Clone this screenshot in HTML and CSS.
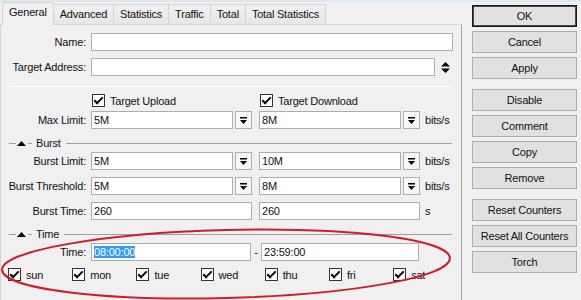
FILE: index.html
```html
<!DOCTYPE html>
<html lang="en">
<head>
  <meta charset="UTF-8">
  <title>Simple Queue</title>
  <link rel="stylesheet" href="styles.css">
</head>
<body>
  <div class="window">
    <!-- left: tabbed form -->
    <div class="main">
      <ul class="tabs">
        <li class="active">General</li>
        <li>Advanced</li>
        <li>Statistics</li>
        <li>Traffic</li>
        <li>Total</li>
        <li>Total Statistics</li>
      </ul>
      <div class="panel">
        <div class="row first">
          <label class="label">Name:</label>
          <div class="box wide"></div>
        </div>
        <div class="row">
          <label class="label">Target Address:</label>
          <div class="box addr"></div>
          <svg class="updown" width="9" height="11" viewBox="0 0 9 11"><path d="M4.5 0 L9 4.5 L0 4.5 Z M0 6.5 L9 6.5 L4.5 11 Z" fill="#000"/></svg>
        </div>
        <div class="divider"></div>

        <div class="row checks">
          <span class="label"></span>
          <div class="pair">
            <span class="check-item"><span class="check"></span>Target Upload</span>
            <span class="check-item"><span class="check"></span>Target Download</span>
          </div>
        </div>
        <div class="row close">
          <label class="label">Max Limit:</label>
          <div class="pair">
            <div class="combo"><div class="box">5M</div><span class="drop"><svg width="7" height="7" viewBox="0 0 7 7"><path d="M0 0H7V1.5H0Z M0 3H7L3.5 7Z" fill="#000"/></svg></span></div>
            <div class="combo"><div class="box">8M</div><span class="drop"><svg width="7" height="7" viewBox="0 0 7 7"><path d="M0 0H7V1.5H0Z M0 3H7L3.5 7Z" fill="#000"/></svg></span></div>
            <span class="unit">bits/s</span>
          </div>
        </div>

        <div class="group-head">
          <span class="rule short"></span>
          <svg class="caret" width="9" height="5" viewBox="0 0 9 5"><path d="M4.5 0L9 5H0Z" fill="#000"/></svg>
          <span class="rule tiny"></span>
          <span class="group-title">Burst</span>
          <span class="rule fill"></span>
        </div>
        <div class="row after-head">
          <label class="label">Burst Limit:</label>
          <div class="pair">
            <div class="combo"><div class="box">5M</div><span class="drop"><svg width="7" height="7" viewBox="0 0 7 7"><path d="M0 0H7V1.5H0Z M0 3H7L3.5 7Z" fill="#000"/></svg></span></div>
            <div class="combo"><div class="box">10M</div><span class="drop"><svg width="7" height="7" viewBox="0 0 7 7"><path d="M0 0H7V1.5H0Z M0 3H7L3.5 7Z" fill="#000"/></svg></span></div>
            <span class="unit">bits/s</span>
          </div>
        </div>
        <div class="row">
          <label class="label">Burst Threshold:</label>
          <div class="pair">
            <div class="combo"><div class="box">5M</div><span class="drop"><svg width="7" height="7" viewBox="0 0 7 7"><path d="M0 0H7V1.5H0Z M0 3H7L3.5 7Z" fill="#000"/></svg></span></div>
            <div class="combo"><div class="box">8M</div><span class="drop"><svg width="7" height="7" viewBox="0 0 7 7"><path d="M0 0H7V1.5H0Z M0 3H7L3.5 7Z" fill="#000"/></svg></span></div>
            <span class="unit">bits/s</span>
          </div>
        </div>
        <div class="row">
          <label class="label">Burst Time:</label>
          <div class="pair">
            <div class="box">260</div>
            <div class="box">260</div>
            <span class="unit">s</span>
          </div>
        </div>

        <div class="group-head">
          <span class="rule short"></span>
          <svg class="caret" width="9" height="5" viewBox="0 0 9 5"><path d="M4.5 0L9 5H0Z" fill="#000"/></svg>
          <span class="rule tiny"></span>
          <span class="group-title">Time</span>
          <span class="rule fill"></span>
        </div>
        <div class="row after-head">
          <label class="label">Time:</label>
          <div class="box time-from"><span class="sel">08:00:00</span></div>
          <span class="dash">-</span>
          <div class="box time-to">23:59:00</div>
        </div>
        <div class="days">
          <span class="check-item"><span class="check"></span>sun</span>
          <span class="check-item"><span class="check"></span>mon</span>
          <span class="check-item"><span class="check"></span>tue</span>
          <span class="check-item"><span class="check"></span>wed</span>
          <span class="check-item"><span class="check"></span>thu</span>
          <span class="check-item"><span class="check"></span>fri</span>
          <span class="check-item"><span class="check"></span>sat</span>
        </div>
      </div>
    </div>

    <!-- right: action buttons -->
    <div class="actions">
      <div class="btn-group">
        <button class="default">OK</button>
        <button>Cancel</button>
        <button>Apply</button>
      </div>
      <div class="btn-group">
        <button>Disable</button>
        <button>Comment</button>
        <button>Copy</button>
        <button>Remove</button>
      </div>
      <div class="btn-group">
        <button>Reset Counters</button>
        <button>Reset All Counters</button>
        <button>Torch</button>
      </div>
    </div>

    <!-- hand-drawn highlight -->
    <svg class="mark" width="581" height="300" viewBox="0 0 581 300">
      <ellipse cx="226" cy="264" rx="224" ry="34" transform="rotate(-1.5 226 264)" fill="none" stroke="#cc1f2b" stroke-width="2"/>
    </svg>
  </div>
</body>
</html>
```

FILE: styles.css
```css
* {
  margin: 0;
  padding: 0;
  box-sizing: border-box;
}
body {
  font-family: 'Liberation Sans', Arial, sans-serif;
  font-size: 11px;
  letter-spacing: -0.2px;
  color: #111;
  background: #f0f0f0;
  overflow: hidden;
}
.window {
  position: relative;
  display: flex;
  width: 581px;
  height: 300px;
  border-top: 2px solid #e1e8f0;
}
/* Tabs */
.main {
  width: 462px;
}
.tabs {
  display: flex;
  align-items: flex-end;
  height: 22px;
  padding-left: 2px;
  list-style: none;
}
.tabs li {
  height: 20px;
  line-height: 18px;
  padding: 0 6px;
  border: 1px solid #d4d4d4;
  border-bottom: none;
  border-left: none;
  background: linear-gradient(#f2f2f2, #e6e6e6);
  white-space: nowrap;
}
.tabs li.active {
  position: relative;
  height: 23px;
  margin-bottom: -1px;
  padding: 0 6px;
  line-height: 19px;
  border-left: 1px solid #d4d4d4;
  background: #f0f0f0;
  z-index: 1;
}
.panel {
  height: 276px;
  border: 1px solid #d4d4d4;
  border-right-color: #a9a9a9;
  border-bottom: none;
  background: #f0f0f0;
}
/* Form rows */
.row {
  display: flex;
  align-items: center;
  height: 18px;
  margin-top: 7px;
}
.row.first {
  margin-top: 8px;
}
.row.close {
  margin-top: 4px;
}
.row.after-head {
  margin-top: 2px;
}
.row.checks {
  height: 13px;
}
.label {
  flex: none;
  width: 90px;
  padding-right: 5px;
  text-align: right;
  white-space: nowrap;
}
.box {
  height: 18px;
  line-height: 16px;
  padding-left: 2px;
  background: #fff;
  border: 1px solid #abadb3;
  white-space: nowrap;
}
.box.wide {
  width: 362px;
}
.box.addr {
  width: 344px;
}
.updown {
  margin-left: 6px;
}
.divider {
  height: 1px;
  margin: 10px 9px 0 8px;
  background: #d8d8d8;
  border-bottom: 1px solid #fff;
}
.pair {
  display: grid;
  grid-template-columns: 161px 161px auto;
  column-gap: 7px;
  align-items: center;
}
.combo {
  display: flex;
  gap: 2px;
}
.combo .box {
  flex: 1;
}
.drop {
  display: flex;
  align-items: center;
  justify-content: center;
  width: 17px;
  height: 18px;
  border: 1px solid #abadb3;
  background: #f7f7f7;
}
.unit {
  margin-left: -2px;
}
/* Checkboxes */
.check-item {
  display: flex;
  align-items: center;
  gap: 5px;
  white-space: nowrap;
}
.row.checks .check-item {
  padding-left: 1px;
}
.check {
  position: relative;
  flex: none;
  width: 13px;
  height: 13px;
  background: #fff;
  border: 1px solid #333;
}
.check::after {
  content: '';
  position: absolute;
  left: 3px;
  top: 0;
  width: 3px;
  height: 7px;
  border-right: 2px solid #000;
  border-bottom: 2px solid #000;
  transform: rotate(45deg);
}
/* Group headers */
.group-head {
  display: flex;
  align-items: center;
  height: 14px;
  margin: 7px 9px 0 8px;
}
.rule {
  height: 1px;
  background: #a0a0a0;
}
.rule.short {
  width: 7px;
  margin-right: 1px;
}
.caret {
  margin-right: 2px;
}
.rule.tiny {
  width: 4px;
  margin-right: 4px;
}
.group-title {
  margin-right: 5px;
}
.rule.fill {
  flex: 1;
}
/* Time */
.box.time-from {
  width: 160px;
}
.box.time-to {
  width: 158px;
}
.dash {
  width: 10px;
  text-align: center;
}
.sel {
  background: #3399ff;
  color: #fff;
}
.days {
  display: grid;
  grid-template-columns: repeat(7, 64.2px);
  margin: 7px 0 0 7px;
}
/* Buttons */
.actions {
  width: 105px;
  margin-left: 10px;
  padding-top: 3px;
}
.btn-group {
  display: flex;
  flex-direction: column;
  gap: 4px;
  margin-bottom: 10px;
}
.btn-group button {
  height: 22px;
  font-family: inherit;
  font-size: 11px;
  letter-spacing: -0.2px;
  color: #111;
  background: #e1e1e1;
  border: 1px solid #adadad;
}
.btn-group button.default {
  border-color: #1a1a1a;
  box-shadow: inset 0 0 0 1px #4a4a4a;
}
.mark {
  position: absolute;
  top: -2px;
  left: 0;
  pointer-events: none;
}
```
